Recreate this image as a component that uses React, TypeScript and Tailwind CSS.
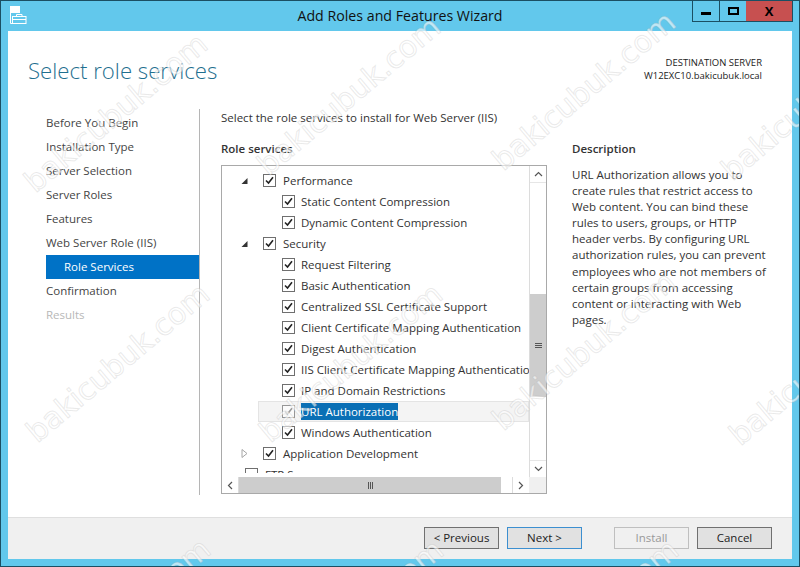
import React from "react";

const steps = [
  { label: "Before You Begin" },
  { label: "Installation Type" },
  { label: "Server Selection" },
  { label: "Server Roles" },
  { label: "Features" },
  { label: "Web Server Role (IIS)" },
  { label: "Role Services", active: true },
  { label: "Confirmation" },
  { label: "Results", disabled: true },
];

const marks = [
  { x: 115, y: 112 },
  { x: 348, y: 95 },
  { x: 583, y: 90 },
  { x: 812, y: 100 },
  { x: 117, y: 362 },
  { x: 350, y: 362 },
  { x: 583, y: 350 },
  { x: 820, y: 365 },
  { x: 118, y: 617 },
  { x: 351, y: 618 },
  { x: 586, y: 618 },
];

function Check({ faded }: { faded?: boolean }) {
  return (
    <span className="flex h-[13px] w-[13px] shrink-0 items-center justify-center border border-[#6f6f6f] bg-white">
      <svg width="9" height="9" viewBox="0 0 9 9">
        <path
          d="M1 4.5 L3.5 7 L8 1.2"
          fill="none"
          stroke={faded ? "#777" : "#222"}
          strokeWidth="1.6"
        />
      </svg>
    </span>
  );
}

function Arrow({ open }: { open: boolean }) {
  return (
    <svg width="7" height="9" viewBox="0 0 7 9" className="shrink-0">
      {open ? (
        <path d="M6.5 2 V8 H0.5 Z" fill="#333" />
      ) : (
        <path d="M1 0.5 L6 4.5 L1 8.5 Z" fill="#fff" stroke="#a6a6a6" />
      )}
    </svg>
  );
}

function ParentRow({ label, open }: { label: string; open: boolean }) {
  return (
    <div className="flex h-[21px] items-center whitespace-nowrap pl-[19px]">
      <span className="flex w-[22px]">
        <Arrow open={open} />
      </span>
      <Check />
      <span className="ml-[7px]">{label}</span>
    </div>
  );
}

function ChildRow({ label }: { label: string }) {
  return (
    <div className="flex h-[21px] items-center whitespace-nowrap pl-[60px]">
      <Check />
      <span className="ml-[6px]">{label}</span>
    </div>
  );
}

function ScrollV() {
  return (
    <div className="flex w-[17px] shrink-0 flex-col border-l border-[#dcdcdc] bg-white">
      <div className="flex h-[17px] items-center justify-center border-b border-[#e6e6e6] bg-white">
        <svg width="9" height="6" viewBox="0 0 9 6">
          <path d="M1 5 L4.5 1.5 L8 5" fill="none" stroke="#555" strokeWidth="1.2" />
        </svg>
      </div>
      <div className="mt-[111px] flex h-[103px] items-center justify-center bg-[#cdcdcd]">
        <div className="flex flex-col gap-px">
          <div className="h-px w-[7px] bg-[#555]" />
          <div className="h-px w-[7px] bg-[#555]" />
          <div className="h-px w-[7px] bg-[#555]" />
        </div>
      </div>
      <div className="grow bg-white" />
      <div className="flex h-[17px] items-center justify-center border-t border-[#e6e6e6] bg-white">
        <svg width="9" height="6" viewBox="0 0 9 6">
          <path d="M1 1 L4.5 4.5 L8 1" fill="none" stroke="#555" strokeWidth="1.2" />
        </svg>
      </div>
    </div>
  );
}

function ScrollH() {
  return (
    <div className="flex h-[16px] shrink-0 bg-[#f0f0f0]">
      <div className="flex w-[17px] items-center justify-center border-r border-[#dcdcdc] bg-white">
        <svg width="6" height="9" viewBox="0 0 6 9">
          <path d="M5 1 L1.5 4.5 L5 8" fill="none" stroke="#555" strokeWidth="1.2" />
        </svg>
      </div>
      <div className="flex w-[262px] items-center justify-center gap-px bg-[#cdcdcd]">
        <div className="h-[7px] w-px bg-[#555]" />
        <div className="h-[7px] w-px bg-[#555]" />
        <div className="h-[7px] w-px bg-[#555]" />
      </div>
      <div className="w-[11px] bg-white" />
      <div className="flex w-[17px] items-center justify-center border-l border-[#dcdcdc] bg-white">
        <svg width="6" height="9" viewBox="0 0 6 9">
          <path d="M1 1 L4.5 4.5 L1 8" fill="none" stroke="#555" strokeWidth="1.2" />
        </svg>
      </div>
      <div className="grow bg-[#f0f0f0]" />
    </div>
  );
}

function Btn({ label, style }: { label: string; style: string }) {
  return (
    <button className={"h-[22px] w-[75px] border text-[11.5px] leading-none " + style}>
      {label}
    </button>
  );
}

export default function App() {
  return (
    <div className="relative h-[567px] w-[800px] overflow-hidden border border-[#1b4f63] bg-[#62c8ec] font-['Open_Sans',sans-serif] text-[11.5px] text-[#333]">
      <div className="relative flex h-[30px] justify-center pt-[5px]">
        <div className="absolute left-[9px] top-[5px]">
          <svg width="17" height="18" viewBox="0 0 17 18" fill="none" stroke="#fff" strokeWidth="1">
            <rect x="0.5" y="0.5" width="9" height="6" fill="#fff" />
            <path d="M0.5 7 V17.5 H5" />
            <rect x="2.5" y="10.5" width="13.5" height="7" fill="#62c8ec" />
            <path d="M6.5 10 V8.5 H12 V10" />
            <path d="M2.5 13.5 H16" />
          </svg>
        </div>
        <span className="whitespace-nowrap text-[14.2px] leading-[20px] text-[#111]">
          Add Roles and Features Wizard
        </span>
      </div>

      {/* window buttons */}
      <div className="absolute right-[6px] top-0 flex h-[21px] border border-t-0 border-[#1b4f63]">
        <div className="flex w-[27px] items-center justify-center border-r border-[#1b4f63]">
          <div className="mt-[4px] h-[3px] w-[10px] bg-black" />
        </div>
        <div className="flex w-[26px] items-center justify-center">
          <div className="h-[8px] w-[11px] border-2 border-black" />
        </div>
        <div className="flex w-[46px] items-center justify-center bg-[#c75050] text-[13px] font-bold leading-none text-black">
          X
        </div>
      </div>

      <div className="mx-[7px] flex h-[528px] flex-col bg-white">
        <div className="flex h-[78px] shrink-0 justify-between pl-[20px] pr-[30px]">
          <div className="pt-[24px] text-[22.2px] font-light leading-[32px] text-[#1f6f8f]">
            Select role services
          </div>
          <div className="pt-[25px] text-right text-[9.5px] leading-[13px] text-[#222]">
            <div>DESTINATION SERVER</div>
            <div>W12EXC10.bakicubuk.local</div>
          </div>
        </div>

        <div className="flex min-h-0 grow">
          <div className="mb-[22px] flex w-[192px] shrink-0 flex-col border-r border-[#b5b5b5] pl-[38px] pt-[2px]">
            {steps.map((s) => (
              <div
                key={s.label}
                className={
                  "flex h-[24px] shrink-0 items-center " +
                  (s.active
                    ? "bg-[#0072c6] pl-[18px] text-white"
                    : s.disabled
                    ? "text-[#b8b8b8]"
                    : "text-[#444]")
                }
              >
                {s.label}
              </div>
            ))}
          </div>

          <div className="flex min-w-0 grow flex-col pl-[21px]">
            <div className="pt-[1px] leading-[16px] text-[#333]">
              Select the role services to install for Web Server (IIS)
            </div>
            <div className="flex grow pt-[15px]">
              <div className="flex w-[326px] shrink-0 flex-col">
                <div className="h-[24px] font-semibold leading-[16px]">Role services</div>
                <div className="flex h-[329px] flex-col border border-[#a9a9a9]">
                  <div className="flex min-h-0 grow">
                    <div className="mb-[4px] min-w-0 grow overflow-hidden pt-[4px] text-[#333]">
                      <ParentRow label="Performance" open />
                      <ChildRow label="Static Content Compression" />
                      <ChildRow label="Dynamic Content Compression" />
                      <ParentRow label="Security" open />
                      <ChildRow label="Request Filtering" />
                      <ChildRow label="Basic Authentication" />
                      <ChildRow label="Centralized SSL Certificate Support" />
                      <ChildRow label="Client Certificate Mapping Authentication" />
                      <ChildRow label="Digest Authentication" />
                      <ChildRow label="IIS Client Certificate Mapping Authentication" />
                      <ChildRow label="IP and Domain Restrictions" />
                      <div className="ml-[36px] flex h-[21px] items-center whitespace-nowrap border border-[#e4e4e4] bg-[#f4f4f4] pl-[23px]">
                        <span className="opacity-70">
                          <Check faded />
                        </span>
                        <span className="ml-[6px] bg-[#0a6fb5] text-white">URL Authorization</span>
                      </div>
                      <ChildRow label="Windows Authentication" />
                      <ParentRow label="Application Development" open={false} />
                      <div className="flex h-[21px] items-center whitespace-nowrap pl-[23px]">
                        <span className="h-[13px] w-[13px] border border-[#6f6f6f]" />
                        <span className="ml-[7px]">FTP Server</span>
                      </div>
                    </div>
                    <ScrollV />
                  </div>
                  <ScrollH />
                </div>
              </div>
              <div className="pl-[25px] leading-[16.1px] text-[#333]">
                <div className="h-[26px] font-semibold">Description</div>
                <p className="w-[194px]">
                  URL Authorization allows you to create rules that restrict access to Web content.
                  You can bind these rules to users, groups, or HTTP header verbs. By configuring
                  URL authorization rules, you can prevent employees who are not members of certain
                  groups from accessing content or interacting with Web pages.
                </p>
              </div>
            </div>
          </div>
        </div>

        <div className="flex h-[42px] shrink-0 items-center border-t border-[#dfdfdf] bg-[#f0f0f0] pb-[2px] pl-[416px]">
          <Btn label="< Previous" style="border-[#707070] bg-[#e1e1e1] text-[#222]" />
          <span className="w-[8px]" />
          <Btn label="Next >" style="border-[#3c8fd0] bg-[#e1e1e1] text-[#222]" />
          <span className="w-[32px]" />
          <Btn label="Install" style="border-[#bfbfbf] bg-[#f0f0f0] text-[#999]" />
          <span className="w-[8px]" />
          <Btn label="Cancel" style="border-[#707070] bg-[#e1e1e1] text-[#222]" />
        </div>
      </div>

      {/* watermark */}
      <div className="pointer-events-none absolute inset-0">
        {marks.map((m) => (
          <span
            key={m.x + "-" + m.y}
            className="absolute -translate-x-1/2 -translate-y-1/2 -rotate-[40deg] whitespace-nowrap font-['DejaVu_Sans',sans-serif] text-[30px] leading-none text-white/60 [-webkit-text-stroke:1px_rgba(170,170,170,0.25)]"
            style={{ left: m.x, top: m.y }}
          >
            bakicubuk.com
          </span>
        ))}
      </div>
    </div>
  );
}
